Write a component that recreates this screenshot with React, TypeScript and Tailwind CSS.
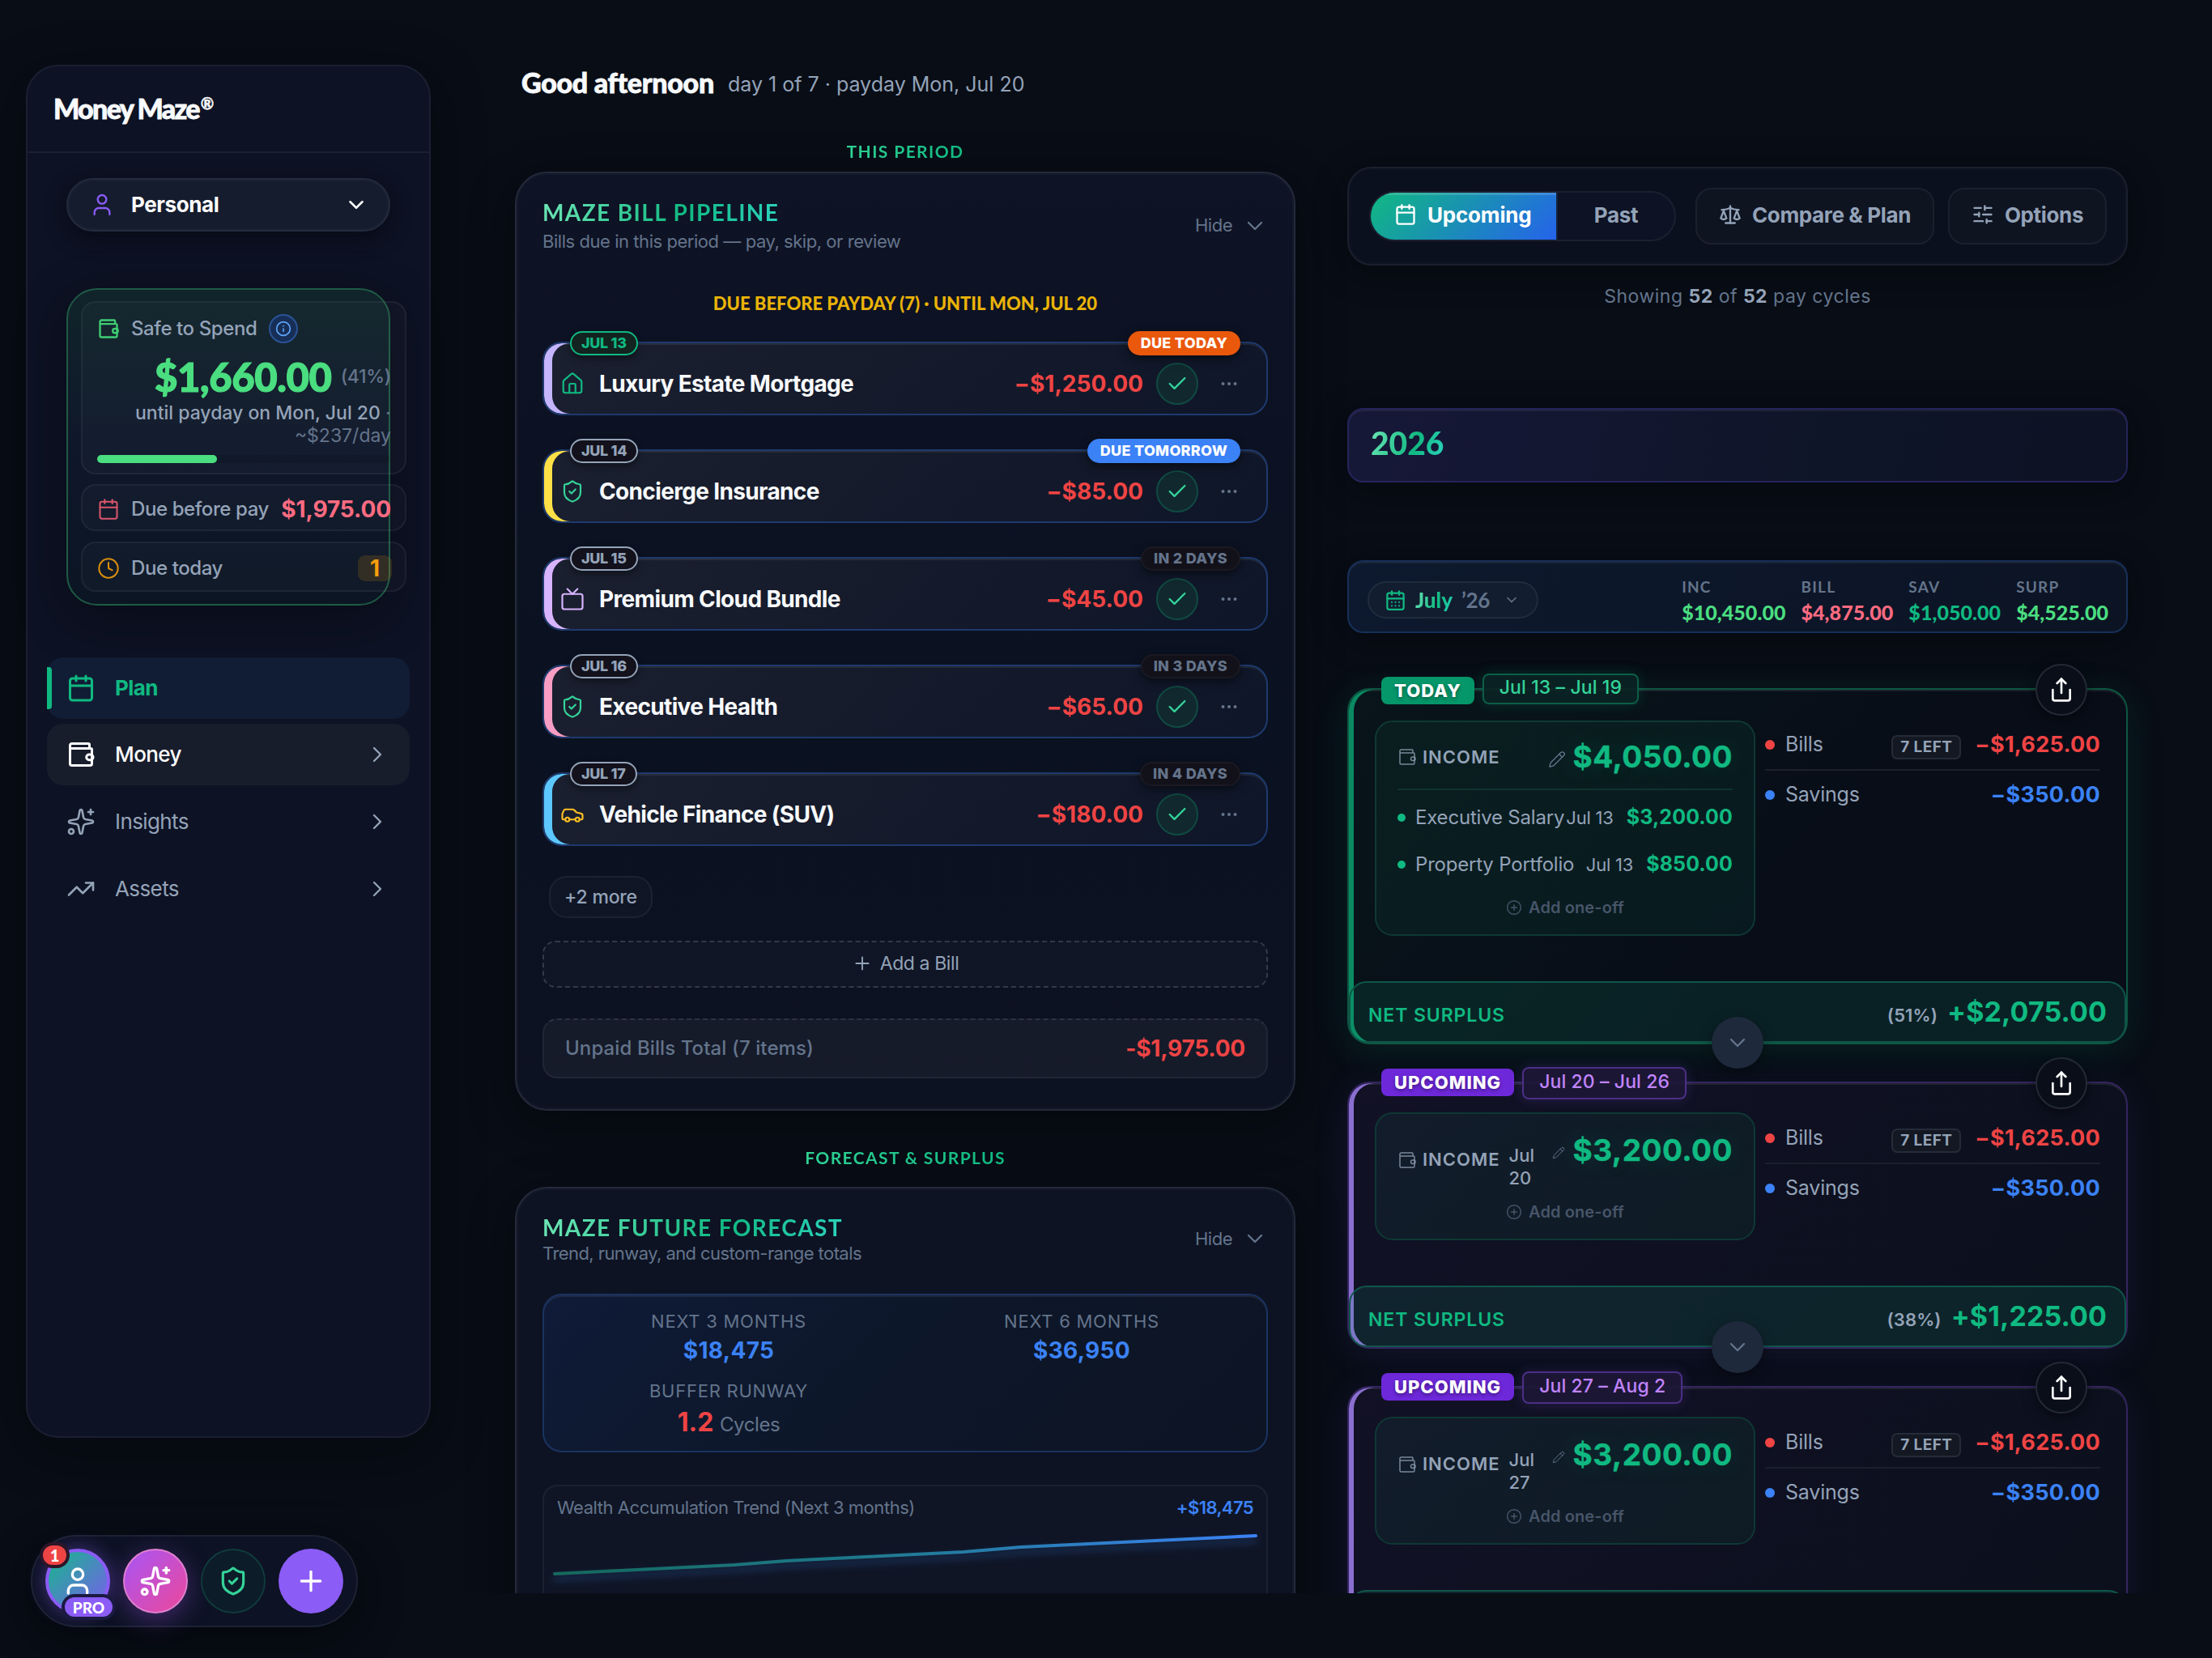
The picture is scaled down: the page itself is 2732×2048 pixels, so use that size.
import React from "react";
import {
  Calendar,
  CalendarDays,
  Car,
  Check,
  ChevronDown,
  ChevronRight,
  CirclePlus,
  Clock,
  House,
  Info,
  Pencil,
  Plus,
  Scale,
  Share,
  ShieldCheck,
  SlidersHorizontal,
  Sparkles,
  TrendingUp,
  Tv,
  User,
} from "lucide-react";

function Wallet({ size, className, strokeWidth = 2 }: { size: number; className?: string; strokeWidth?: number }) {
  return (
    <svg
      width={size}
      height={size}
      viewBox="0 0 24 24"
      fill="none"
      stroke="currentColor"
      strokeWidth={strokeWidth}
      strokeLinecap="round"
      strokeLinejoin="round"
      className={className}
    >
      <path d="M19 7V4a1 1 0 0 0-1-1H4.5A1.5 1.5 0 0 0 3 4.5v15A1.5 1.5 0 0 0 4.5 21h15a1.5 1.5 0 0 0 1.5-1.5V8a1 1 0 0 0-1-1H3" />
      <rect x="16.5" y="12" width="5.5" height="4.5" rx="2.2" />
    </svg>
  );
}

function Dots() {
  return (
    <svg width={24} height={24} viewBox="0 0 24 24" className="fill-[#64748b]">
      <circle cx="4.5" cy="12" r="2" />
      <circle cx="12" cy="12" r="2" />
      <circle cx="19.5" cy="12" r="2" />
    </svg>
  );
}

/* ---------- Sidebar ---------- */

function NavItem({
  icon,
  label,
  tone,
  arrow = true,
}: {
  icon: React.ReactNode;
  label: string;
  tone: string;
  arrow?: boolean;
}) {
  return (
    <div className={"relative flex h-[76px] items-center rounded-[20px] pl-[24px] pr-[24px] " + tone}>
      {icon}
      <span className="ml-[24px] flex-1 text-[26px] leading-[36px] tracking-[-0.6px]">{label}</span>
      {arrow && <ChevronRight size={32} strokeWidth={1.75} className="text-[#94a3b8]" />}
    </div>
  );
}

function Sidebar() {
  return (
    <aside className="ml-[32px] w-[500px] shrink-0 pt-[80px]">
      <div className="flex h-[1696px] flex-col rounded-[40px] border-2 border-[#1a2032] bg-[#0d1224] shadow-[0_16px_64px_rgba(0,0,0,0.35)]">
        <div className="flex h-[107px] items-center border-b-2 border-[#1a2032] pb-[2px] pl-[32px]">
          <div className="flex font-['Lato'] text-[34px] font-black leading-[40px] tracking-[-1.7px] text-[#f8fafc] [-webkit-text-stroke:0.8px_#f8fafc]">
            Money Maze
            <span className="relative -top-[7px] ml-[2px] text-[20px] tracking-normal [-webkit-text-stroke:0.4px_#f8fafc]">®</span>
          </div>
        </div>

        <div className="mx-[48px] mt-[31px] flex h-[66px] items-center rounded-full border-2 border-[#232b3d] bg-[#151c2e] pl-[26px] pr-[25px] shadow-[0_8px_28px_rgba(0,0,0,0.45),inset_0_0_0_2px_rgba(255,255,255,0.02)]">
          <User size={32} strokeWidth={1.75} className="text-[#8b5cf6]" />
          <span className="ml-[20px] flex-1 text-[26px] font-bold leading-[36px] tracking-[-0.4px] text-white">Personal</span>
          <ChevronDown size={30} className="text-white" />
        </div>

        <div className="mx-[48px] mt-[70px] flex h-[392px] flex-col rounded-[38px] border-2 border-[#1f5a44] bg-[linear-gradient(180deg,#10242a,#0f172a_50%,#0b1523)] pl-[16px] pt-[14px] shadow-[0_16px_60px_rgba(0,0,0,0.35)]">
          <div className="h-[214px] w-[402px] rounded-[18px] border-2 border-white/5 bg-white/[0.025] pl-[18px] pr-[17px]">
            <div className="mt-[14px] flex h-[36px] items-center">
              <Wallet size={28} className="text-[#3fce74]" />
              <span className="ml-[14px] text-[24px] font-medium leading-[36px] tracking-[-0.4px] text-[#94a3b8]">
                Safe to Spend
              </span>
              <span className="ml-[15px] flex size-[36px] items-center justify-center rounded-full border-2 border-[#2a5397] bg-[#172f57]">
                <Info size={20} className="text-[#60a5fa]" />
              </span>
            </div>
            <div className="mt-[11px] flex h-[60px] items-center justify-end">
              <span className="font-['Lato'] text-[49px] font-black leading-[60px] tracking-[-0.4px] text-[#4ade80] [-webkit-text-stroke:1.2px_#4ade80]">
                $1,660.00
              </span>
              <span className="ml-[11px] text-[23px] font-medium tracking-[-0.3px] text-[#64748b]">(41%)</span>
            </div>
            <div className="mt-px text-right text-[23px] font-medium leading-[28px] text-[#94a3b8]">
              until payday on Mon, Jul 20 <span className="text-[#64748b]">·</span>
            </div>
            <div className="text-right text-[23px] leading-[28px] text-[#64748b]">~$237/day</div>
            <div className="mt-[10px] h-[10px] w-[362px] rounded-full bg-black/10">
              <div className="h-full w-[148px] rounded-full bg-[#4ade80]" />
            </div>
          </div>
          <div className="mt-[12px] flex h-[58px] w-[402px] items-center rounded-[18px] border-2 border-white/5 bg-white/[0.025] pl-[18px] pr-[17px] pt-[3px]">
            <Calendar size={28} strokeWidth={1.75} className="text-[#d9566c]" />
            <span className="ml-[14px] flex-1 whitespace-nowrap text-[24px] font-medium tracking-[-0.4px] text-[#94a3b8]">
              Due before pay
            </span>
            <span className="text-[28px] font-bold tracking-[-0.1px] text-[#ff6b81]">$1,975.00</span>
          </div>
          <div className="mt-[13px] flex h-[62px] w-[402px] items-center rounded-[18px] border-2 border-white/5 bg-white/[0.025] pl-[18px] pr-[16px] pt-[3px]">
            <Clock size={28} strokeWidth={1.75} className="text-[#d98f0d]" />
            <span className="ml-[14px] flex-1 text-[24px] font-medium tracking-[-0.4px] text-[#94a3b8]">Due today</span>
            <span className="flex h-[32px] w-[42px] items-center justify-center rounded-[9px] bg-[#f59e0b]/15 text-[28px] font-bold text-[#f59e0b]">
              1
            </span>
          </div>
        </div>

        <nav className="mx-[24px] mt-[64px] flex flex-col gap-[6px]">
          <NavItem
            icon={
              <>
                <span className="absolute left-0 top-[12px] h-[52px] w-[6px] rounded-r-[4px] bg-[#10b981]" />
                <Calendar size={36} />
              </>
            }
            label="Plan"
            tone="bg-[#111d35] text-[#10b981] font-bold"
            arrow={false}
          />
          <NavItem icon={<Wallet size={36} />} label="Money" tone="bg-[#181d2c] text-white font-medium" />
          <NavItem icon={<Sparkles size={36} strokeWidth={1.75} />} label="Insights" tone="pt-[2px] text-[#94a3b8]" />
          <NavItem icon={<TrendingUp size={36} strokeWidth={1.75} />} label="Assets" tone="pt-[3px] text-[#94a3b8]" />
        </nav>
      </div>

      <div className="ml-[6px] mt-[120px] flex h-[114px] w-[404px] items-center gap-[16px] rounded-full border-2 border-[#1c2233] bg-[#0d1224] pl-[16px] shadow-[0_16px_56px_rgba(0,0,0,0.45)]">
        <div className="relative flex size-[80px] items-center justify-center rounded-full border-4 border-[#8b5cf6] bg-[linear-gradient(135deg,#14b88a,#7c5cf0)] shadow-[0_0_24px_rgba(139,92,246,0.45)]">
          <User size={40} className="text-white" />
          <span className="absolute -left-[11px] -top-[12px] flex h-[32px] w-[37px] items-center justify-center rounded-full border-4 border-[#2c1628] bg-[#ef4444] font-['Lato'] text-[20px] font-black leading-none text-white">
            1
          </span>
          <span className="absolute -bottom-[12px] left-[16px] flex h-[32px] w-[67px] items-center justify-center rounded-full border-4 border-[#1b1a42] bg-[#8b5cf6] font-['Lato'] text-[19px] font-black leading-none text-white">
            PRO
          </span>
        </div>
        <div className="flex size-[80px] items-center justify-center rounded-full border-2 border-[#e07fd0] bg-[linear-gradient(135deg,#a855f7,#ec4899)] shadow-[0_8px_32px_rgba(168,85,247,0.35)]">
          <Sparkles size={40} className="text-white" />
        </div>
        <div className="flex size-[80px] items-center justify-center rounded-full border-2 border-[#0f3b3b] bg-[#0d1c29]">
          <ShieldCheck size={38} className="text-[#34d399]" />
        </div>
        <div className="flex size-[80px] items-center justify-center rounded-full bg-[#8b5cf6]">
          <Plus size={40} className="text-white" />
        </div>
      </div>
    </aside>
  );
}

/* ---------- Middle column ---------- */

const GRADIENT = "bg-[linear-gradient(110deg,#6ee7b7,#10b981_60%,#2dd4bf)] bg-clip-text text-transparent";

function SectionLabel({ children, className }: { children: React.ReactNode; className: string }) {
  return (
    <div className={"flex h-[30px] items-center justify-center " + className}>
      <span className="bg-[linear-gradient(90deg,#2fd193,#10b981)] bg-clip-text font-['Lato'] text-[21px] font-bold leading-[30px] tracking-[1.4px] text-transparent">
        {children}
      </span>
    </div>
  );
}

function CardHeader({ title, sub, subClass, hide }: { title: string; sub: string; subClass: string; hide: string }) {
  return (
    <div className="flex h-[70px] items-center justify-between">
      <div className="h-[70px]">
        <div>
          <span className={"font-['Lato'] text-[28px] font-bold leading-[36px] tracking-[1.4px] " + GRADIENT}>{title}</span>
        </div>
        <div className={"text-[22px] leading-[32px] text-[#64748b] " + subClass}>{sub}</div>
      </div>
      <div className={"flex items-center text-[22px] tracking-[-0.5px] text-[#64748b] " + hide}>
        Hide
        <ChevronDown size={32} strokeWidth={1.75} className="ml-[12px]" />
      </div>
    </div>
  );
}

type Bill = {
  date: string;
  datePill: string;
  due: string;
  duePill: string;
  bar: string;
  icon: React.ReactNode;
  name: string;
  amount: string;
};

const GREY_DATE = "border-[#94a3b8] bg-[#12111c] text-[#94a3b8]";
const GREY_DUE = "border-2 border-[#1b1922] bg-[#12111a] text-[#64748b] px-[14px]";

const BILLS: Bill[] = [
  {
    date: "JUL 13",
    datePill: "border-[#10b981] bg-[#13231f] text-[#10b981]",
    due: "DUE TODAY",
    duePill: "bg-[#ea580c] text-white px-[16px]",
    bar: "shadow-[inset_10px_0_0_#c4b5fd,inset_0_2px_0_rgba(255,255,255,0.07)]",
    icon: <House size={30} strokeWidth={1.75} className="text-[#10b981]" />,
    name: "Luxury Estate Mortgage",
    amount: "−$1,250.00",
  },
  {
    date: "JUL 14",
    datePill: GREY_DATE,
    due: "DUE TOMORROW",
    duePill: "bg-[#3b82f6] text-white px-[16px]",
    bar: "shadow-[inset_10px_0_0_#fde047,inset_0_2px_0_rgba(255,255,255,0.07)]",
    icon: <ShieldCheck size={30} strokeWidth={1.75} className="text-[#34d399]" />,
    name: "Concierge Insurance",
    amount: "−$85.00",
  },
  {
    date: "JUL 15",
    datePill: GREY_DATE,
    due: "IN 2 DAYS",
    duePill: GREY_DUE,
    bar: "shadow-[inset_10px_0_0_#d8b4fe,inset_0_2px_0_rgba(255,255,255,0.07)]",
    icon: <Tv size={30} strokeWidth={1.75} className="text-[#d8b4fe]" />,
    name: "Premium Cloud Bundle",
    amount: "−$45.00",
  },
  {
    date: "JUL 16",
    datePill: GREY_DATE,
    due: "IN 3 DAYS",
    duePill: GREY_DUE,
    bar: "shadow-[inset_10px_0_0_#f99dc4,inset_0_2px_0_rgba(255,255,255,0.07)]",
    icon: <ShieldCheck size={30} strokeWidth={1.75} className="text-[#34d399]" />,
    name: "Executive Health",
    amount: "−$65.00",
  },
  {
    date: "JUL 17",
    datePill: GREY_DATE,
    due: "IN 4 DAYS",
    duePill: GREY_DUE,
    bar: "shadow-[inset_10px_0_0_#5cc8ff,inset_0_2px_0_rgba(255,255,255,0.07)]",
    icon: <Car size={30} strokeWidth={1.75} className="text-[#fbbf24]" />,
    name: "Vehicle Finance (SUV)",
    amount: "−$180.00",
  },
];

function BillRow({ bill }: { bill: Bill }) {
  return (
    <div
      className={
        "relative flex h-[91px] items-center rounded-[24px] border-2 border-[#1e3a6e] bg-[linear-gradient(135deg,#1b2030,#151b2b_45%,#0f1629)] pl-[20px] pr-[34px] pt-[12px] " +
        bill.bar
      }
    >
      <span
        className={
          "absolute -top-[15px] left-[32px] flex h-[30px] items-center whitespace-nowrap rounded-full border-2 px-[12px] text-[18px] font-extrabold leading-none tracking-[-0.3px] shadow-[0_4px_8px_rgba(0,0,0,0.4)] " +
          bill.datePill
        }
      >
        {bill.date}
      </span>
      <span
        className={
          "absolute -top-[15px] right-[32px] flex h-[30px] items-center whitespace-nowrap rounded-full text-[18px] font-extrabold leading-none tracking-[0.3px] shadow-[0_4px_12px_rgba(0,0,0,0.5)] " +
          bill.duePill
        }
      >
        {bill.due}
      </span>
      {bill.icon}
      <span className="ml-[18px] flex-1 text-[28px] font-bold leading-[40px] tracking-[-0.65px] text-[#f8fafc]">
        {bill.name}
      </span>
      <span className="text-[28px] font-bold leading-[40px] tracking-[0.05px] text-[#ef4444]">{bill.amount}</span>
      <span className="ml-[16px] flex size-[52px] items-center justify-center rounded-full border-2 border-[#104a42] bg-[#11282f]">
        <Check size={28} className="text-[#34d399]" />
      </span>
      <span className="ml-[26px]">
        <Dots />
      </span>
    </div>
  );
}

function Stat({ label, children }: { label: string; children: React.ReactNode }) {
  return (
    <div className="flex h-[86px] flex-col items-center">
      <div className="text-[22px] leading-[32px] tracking-[0.75px] text-[#64748b]">{label}</div>
      {children}
    </div>
  );
}

const CARD = "border-2 border-[#232a3a] shadow-[0_16px_56px_rgba(0,0,0,0.4),inset_0_0_0_2px_rgba(255,255,255,0.025)]";

function MiddleColumn() {
  return (
    <section className="w-[964px] shrink-0 pt-[82px]">
      <div className="flex h-[40px] items-center pl-[8px]">
        <span className="font-['Lato'] text-[34px] font-black leading-[40px] tracking-[-0.3px] text-[#f8fafc] [-webkit-text-stroke:0.8px_#f8fafc]">
          Good afternoon
        </span>
        <span className="ml-[17px] pt-[4px] text-[25px] leading-[36px] text-[#94a3b8]">
          day 1 of 7 · payday Mon, Jul 20
        </span>
      </div>

      <SectionLabel className="mt-[50px]">THIS PERIOD</SectionLabel>

      <div
        className={
          "mt-[10px] rounded-[40px] bg-[linear-gradient(180deg,#0e1325,#0a1120_60%,#0d1222)] px-[32px] pb-[38px] pt-[30px] " +
          CARD
        }
      >
        <CardHeader
          title="MAZE BILL PIPELINE"
          sub="Bills due in this period — pay, skip, or review"
          subClass="mt-[2px] tracking-[-0.45px]"
          hide="-mt-px"
        />
        <div className="mt-[46px] text-center font-['Lato'] text-[22px] font-black leading-[30px] tracking-[0px] text-[#eab308]">
          DUE BEFORE PAYDAY (7) · UNTIL MON, JUL 20
        </div>
        <div className="mt-[32px] flex flex-col gap-[42px]">
          {BILLS.map((b) => (
            <BillRow key={b.date} bill={b} />
          ))}
        </div>
        <div className="ml-[8px] mt-[37px] flex h-[52px] w-[128px] items-center justify-center rounded-[22px] border-2 border-white/5 bg-white/[0.02] text-[23px] font-medium tracking-[-0.2px] text-[#94a3b8]">
          +2 more
        </div>
        <div className="mt-[28px] flex h-[58px] items-center justify-center rounded-[16px] border-2 border-dashed border-white/15 bg-white/[0.02] pb-[2px] text-[23px] tracking-[-0.4px] text-[#94a3b8]">
          <Plus size={26} strokeWidth={1.75} className="mr-[9px]" />
          Add a Bill
        </div>
        <div className="mt-[38px] flex h-[74px] items-center justify-between rounded-[18px] border-2 border-white/5 border-t-white/10 bg-white/[0.04] pl-[26px] pr-[26px] [border-top-style:dashed]">
          <span className="text-[24px] font-medium tracking-[0.1px] text-[#64748b]">Unpaid Bills Total (7 items)</span>
          <span className="text-[28px] font-bold tracking-[-0.2px] text-[#ef4444]">-$1,975.00</span>
        </div>
      </div>

      <SectionLabel className="mt-[43px]">FORECAST &amp; SURPLUS</SectionLabel>

      <div className={"mt-[21px] h-[620px] rounded-[40px] bg-[#0d1323] px-[32px] pt-[30px] " + CARD}>
        <CardHeader
          title="MAZE FUTURE FORECAST"
          sub="Trend, runway, and custom-range totals"
          subClass="-mt-[2px] tracking-[-0.57px]"
          hide="-mt-[6px]"
        />
        <div className="mt-[30px] grid h-[196px] grid-cols-2 content-start gap-x-[12px] rounded-[24px] border-2 border-[#1b3360] bg-[linear-gradient(135deg,#0f1b38,#0d1729_50%,#0d1424)] px-[16px] pt-[16px] shadow-[inset_0_2px_0_rgba(255,255,255,0.07)]">
          <Stat label="NEXT 3 MONTHS">
            <div className="mt-px text-[28px] font-bold leading-[38px] tracking-[0.3px] text-[#3b82f6]">$18,475</div>
          </Stat>
          <Stat label="NEXT 6 MONTHS">
            <div className="mt-px text-[28px] font-bold leading-[38px] tracking-[0.3px] text-[#3b82f6]">$36,950</div>
          </Stat>
          <Stat label="BUFFER RUNWAY">
            <div className="mt-px text-[32px] font-bold leading-[44px] text-[#ef4444]">
              1.2 <span className="text-[24px] font-normal tracking-[-0.4px] text-[#64748b]">Cycles</span>
            </div>
          </Stat>
        </div>
        <div className="mt-[40px] h-[240px] rounded-[18px] border-2 border-white/5 bg-white/[0.01]">
          <div className="mt-[11px] flex h-[30px] items-center justify-between px-[16px] text-[22px] tracking-[-0.45px]">
            <span className="text-[#64748b]">Wealth Accumulation Trend (Next 3 months)</span>
            <span className="font-semibold tracking-[-0.6px] text-[#3b82f6]">+$18,475</span>
          </div>
          <svg width={892} height={88} viewBox="672 1877 892 88" fill="none">
            <defs>
              <linearGradient id="trend" x1="684" y1="0" x2="1552" y2="0" gradientUnits="userSpaceOnUse">
                <stop offset="0" stopColor="#15695a" />
                <stop offset="0.5" stopColor="#217b95" />
                <stop offset="1" stopColor="#3b82f6" />
              </linearGradient>
              <filter id="glow" x="-5%" y="-60%" width="110%" height="250%">
                <feDropShadow dx="0" dy="6" stdDeviation="5" floodColor="#3b82f6" floodOpacity="0.35" />
              </filter>
            </defs>
            <path
              d="M685 1944L907 1933Q920 1932 971 1928L1190 1917Q1203 1916 1261 1911L1551 1897"
              stroke="url(#trend)"
              strokeWidth="4"
              strokeLinecap="round"
              filter="url(#glow)"
            />
          </svg>
        </div>
      </div>
    </section>
  );
}

/* ---------- Right column ---------- */

type Income = { name: string; date: string; amount: string };

type Period = {
  label: string;
  range: string;
  today: boolean;
  incomeDate?: string[];
  income: string;
  incomes: Income[];
  net?: { percent: string; surplus: string };
};

const PERIODS: Period[] = [
  {
    label: "TODAY",
    range: "Jul 13 – Jul 19",
    today: true,
    income: "$4,050.00",
    incomes: [
      { name: "Executive Salary", date: "Jul 13", amount: "$3,200.00" },
      { name: "Property Portfolio", date: "Jul 13", amount: "$850.00" },
    ],
    net: { percent: "(51%)", surplus: "+$2,075.00" },
  },
  {
    label: "UPCOMING",
    range: "Jul 20 – Jul 26",
    today: false,
    incomeDate: ["Jul", "20"],
    income: "$3,200.00",
    incomes: [],
    net: { percent: "(38%)", surplus: "+$1,225.00" },
  },
  {
    label: "UPCOMING",
    range: "Jul 27 – Aug 2",
    today: false,
    incomeDate: ["Jul", "27"],
    income: "$3,200.00",
    incomes: [],
  },
];

const INCOME_AMOUNT =
  "text-[37px] font-bold leading-[40px] tracking-[0.5px] text-[#10b981] [-webkit-text-stroke:0.4px_#10b981] [text-shadow:0_0_32px_rgba(16,185,129,0.2)]";

function PeriodCard({ p }: { p: Period }) {
  return (
    <div
      className={
        "relative flex shrink-0 flex-col rounded-[28px] border-2 " +
        (p.today
          ? "h-[440px] border-[#0d5741] bg-[linear-gradient(135deg,#08151a,#080d18_60%)] shadow-[0_8px_48px_rgba(16,185,129,0.12),inset_6px_0_0_#0b8a62,inset_0_2px_0_rgba(255,255,255,0.08)]"
          : "h-[330px] border-[#342560] bg-[linear-gradient(135deg,#121126,#0b101c)] shadow-[0_8px_48px_rgba(139,92,246,0.1),inset_6px_0_0_#8b6fd0,inset_0_2px_0_rgba(255,255,255,0.08)]")
      }
    >
      <div className="absolute -top-[20px] left-[40px] flex items-start gap-[10px]">
        <span
          className={
            "flex h-[34px] items-center rounded-[8px] px-[16px] text-[22px] font-extrabold leading-none tracking-[1px] text-white [text-shadow:0_2px_4px_rgba(0,0,0,0.4)] " +
            (p.today ? "mt-[4px] bg-[#059669]" : "mt-[2px] bg-[#6d28d9]")
          }
        >
          {p.label}
        </span>
        <span
          className={
            "flex items-center rounded-[8px] border-2 px-[19px] pb-[3px] text-[23px] font-medium leading-none tracking-[0.1px] " +
            (p.today
              ? "h-[38px] border-[#0c5e47] bg-[#0a2424]/90 text-[#34d399] shadow-[0_0_16px_rgba(16,185,129,0.2)]"
              : "h-[40px] border-[#4b2f86] bg-[#1e1737]/90 text-[#c084fc] shadow-[0_0_16px_rgba(139,92,246,0.2)]")
          }
        >
          {p.range}
        </span>
      </div>
      <span className="absolute -top-[32px] right-[48px] flex size-[64px] items-center justify-center rounded-full border-2 border-[#242936] bg-[#0a0e19] shadow-[0_4px_16px_rgba(0,0,0,0.5)]">
        <Share size={32} className="text-white" />
      </span>

      <div className="flex pl-[32px] pr-[32px] pt-[36px]">
        <div
          className={
            "w-[470px] shrink-0 rounded-[22px] border-2 border-[#0f3834] pl-[26px] pr-[26px] " +
            (p.today
              ? "mt-[2px] h-[266px] bg-[linear-gradient(135deg,#0a1e20,#081a1f)]"
              : "h-[158px] bg-[linear-gradient(135deg,#121c2b,#0e1b24)]")
          }
        >
          {p.today ? (
            <div className="flex h-[84px] items-center border-b-2 border-[#0e3330] pt-[4px]">
              <Wallet size={24} strokeWidth={1.5} className="text-[#94a3b8]/80" />
              <span className="ml-[7px] flex-1 text-[22px] font-semibold tracking-[1px] text-[#94a3b8]">INCOME</span>
              <Pencil size={22} strokeWidth={1.5} className="mt-[6px] text-[#64748b]" />
              <span className={"ml-[9px] " + INCOME_AMOUNT}>{p.income}</span>
            </div>
          ) : (
            <div className="flex h-[84px] pt-[14px]">
              <div className="flex h-[84px] items-center pt-px">
                <Wallet size={24} strokeWidth={1.5} className="text-[#94a3b8]/80" />
                <span className="ml-[7px] text-[22px] font-semibold tracking-[1px] text-[#94a3b8]">INCOME</span>
              </div>
              <div className="ml-[11px] mt-[23px] flex-1 text-[22px] font-medium leading-[28px] text-[#94a3b8]">
                {p.incomeDate?.map((d) => (
                  <div key={d}>{d}</div>
                ))}
              </div>
              <Pencil size={16} strokeWidth={1.5} className="mt-[26px] text-[#64748b]" />
              <span className={"ml-[10px] mt-[11px] " + INCOME_AMOUNT}>{p.income}</span>
            </div>
          )}
          {p.incomes.length > 0 && (
            <div className="mt-[5px] flex flex-col">
              {p.incomes.map((i) => (
                <div key={i.name} className="flex h-[58px] items-center">
                  <span className="size-[10px] shrink-0 rounded-full bg-[#10b981]" />
                  <span className="ml-[12px] flex-1 whitespace-nowrap text-[24px] tracking-[-0.2px] text-[#94a3b8]">
                    {i.name}
                  </span>
                  <span className="text-[22px] tracking-[-0.2px] text-[#94a3b8]">{i.date}</span>
                  <span className="ml-[16px] text-[25px] font-bold tracking-[0.1px] text-[#10b981]">{i.amount}</span>
                </div>
              ))}
            </div>
          )}
          <div
            className={
              "flex h-[40px] items-center justify-center text-[20px] font-semibold tracking-[0.1px] text-[#475569] " +
              (p.today ? "mt-[4px]" : "mt-[17px]")
            }
          >
            <CirclePlus size={20} strokeWidth={1.75} className="mr-[8px]" />
            Add one-off
          </div>
        </div>

        <div className="ml-[12px] flex-1">
          <div className="flex h-[64px] items-center border-b-2 border-[#1c202d] pt-px">
            <span className="size-[12px] rounded-full bg-[#ef4444]" />
            <span className="ml-[13px] flex-1 text-[25px] tracking-[-0.2px] text-[#94a3b8]">Bills</span>
            <span className="mt-[6px] flex h-[30px] items-center rounded-[7px] border-2 border-[#252b38] bg-[#131822] px-[9px] text-[19px] font-bold leading-none tracking-[0.4px] text-[#94a3b8]">
              7 LEFT
            </span>
            <span className="ml-[17px] text-[27px] font-bold leading-[32px] tracking-[0.3px] text-[#ef4444]">
              −$1,625.00
            </span>
          </div>
          <div className="flex h-[60px] items-center">
            <span className="size-[12px] rounded-full bg-[#3b82f6]" />
            <span className="ml-[13px] flex-1 text-[25px] tracking-[-0.2px] text-[#94a3b8]">Savings</span>
            <span className="text-[27px] font-bold leading-[32px] tracking-[0.3px] text-[#3b82f6]">−$350.00</span>
          </div>
        </div>
      </div>

      <div className="mt-auto flex h-[76px] items-center justify-between rounded-[22px] border-2 border-[#10564a] bg-[#10b981]/12 pl-[22px] pr-[22px]">
        {p.net && (
          <>
            <span className="pt-[8px] text-[23px] font-semibold tracking-[0.9px] text-[#10b981]">NET SURPLUS</span>
            <span className="flex items-baseline pt-px">
              <span className="text-[22px] font-semibold tracking-[0.1px] text-[#94a3b8]">{p.net.percent}</span>
              <span className="ml-[12px] text-[34px] font-bold leading-[40px] tracking-[0.1px] text-[#10b981]">
                {p.net.surplus}
              </span>
            </span>
          </>
        )}
      </div>
      <span className="absolute -bottom-[32px] left-[448px] z-10 flex size-[64px] items-center justify-center rounded-full bg-[#1e293b] shadow-[0_4px_16px_rgba(0,0,0,0.4)]">
        <ChevronDown size={32} strokeWidth={1.75} className="text-[#64748b]" />
      </span>
    </div>
  );
}

function MonthTotal({ label, value, tone }: { label: string; value: string; tone: string }) {
  return (
    <div className="font-['Lato']">
      <div className="text-[19px] font-bold leading-[30px] tracking-[1.2px] text-[#64748b]">{label}</div>
      <div className={"text-[25px] font-black leading-[32px] tracking-[0.05px] " + tone}>{value}</div>
    </div>
  );
}

const TOOL_BUTTON =
  "flex h-[70px] shrink-0 items-center justify-center rounded-[20px] border-2 border-[#1b202e] bg-[#0f1421] pb-[4px] text-[26px] font-bold tracking-[-0.35px] text-[#94a3b8]";

function RightColumn() {
  return (
    <section className="w-[964px] shrink-0 pt-[206px]">
      <div className="flex h-[122px] items-center rounded-[30px] border-2 border-[#1a202e] bg-[#0b101e] px-[25px] shadow-[0_8px_40px_rgba(0,0,0,0.35),inset_0_0_0_2px_rgba(255,255,255,0.015)]">
        <div className="flex h-[62px] w-[379px] shrink-0 overflow-hidden rounded-full border-2 border-[#1b2030] bg-[#0d1224]">
          <div className="flex w-[231px] items-center border-r-2 border-[#15233c] bg-[linear-gradient(135deg,#10b981,#2563eb)] pb-[4px] pl-[29px] text-[26px] font-bold tracking-[-0.2px] text-white shadow-[inset_0_3px_0_rgba(255,255,255,0.15)]">
            <Calendar size={28} className="mr-[13px]" />
            Upcoming
          </div>
          <div className="flex flex-1 items-center justify-center pb-[4px] text-[26px] font-bold tracking-[-0.3px] text-[#94a3b8]">
            Past
          </div>
        </div>
        <div className={"ml-[24px] w-[295px] " + TOOL_BUTTON}>
          <Scale size={28} className="mr-[13px]" />
          Compare &amp; Plan
        </div>
        <div className={"ml-[17px] w-[196px] " + TOOL_BUTTON}>
          <SlidersHorizontal size={28} className="mr-[13px]" />
          Options
        </div>
      </div>

      <div className="mt-[20px] text-center text-[23px] leading-[36px] tracking-[0.5px] text-[#64748b]">
        Showing <b className="font-bold text-[#94a3b8]">52</b> of <b className="font-bold text-[#94a3b8]">52</b> pay cycles
      </div>

      <div className="mt-[120px] flex h-[92px] items-center rounded-[20px] border-2 border-[#25245a] bg-[linear-gradient(100deg,#161838,#0f1529_60%,#0d1324)] pl-[27px] shadow-[0_8px_40px_rgba(0,0,0,0.35),inset_0_2px_0_rgba(255,255,255,0.06)]">
        <span className={"-mt-[6px] font-['Lato'] text-[39px] font-black leading-[48px] " + GRADIENT}>2026</span>
      </div>

      <div className="mt-[96px] flex h-[90px] items-center rounded-[20px] border-2 border-[#172f59] bg-[linear-gradient(100deg,#0d192e,#0c1424)] pl-[23px] pr-[22px] shadow-[0_8px_40px_rgba(0,0,0,0.35),inset_0_2px_0_rgba(255,255,255,0.06)]">
        <div className="mt-[8px] flex h-[46px] w-[211px] items-center rounded-full border-2 border-[#202b3d] bg-[#121d30] pl-[19px] font-['Lato'] text-[26px] font-black">
          <CalendarDays size={27} className="text-[#10b981]" />
          <span className={"ml-[11px] " + GRADIENT}>July</span>
          <span className="ml-[11px] font-bold tracking-[-0.3px] text-[#64748b]">’26</span>
          <ChevronDown size={20} className="ml-[17px] text-[#64748b]" />
        </div>
        <div className="ml-auto flex gap-[19px] pt-[8px]">
          <MonthTotal label="INC" value="$10,450.00" tone="text-[#4ade80]" />
          <MonthTotal label="BILL" value="$4,875.00" tone="text-[#ff6b81]" />
          <MonthTotal label="SAV" value="$1,050.00" tone="text-[#10b981]" />
          <MonthTotal label="SURP" value="$4,525.00" tone="text-[#4ade80]" />
        </div>
      </div>

      <div className="mt-[68px] flex flex-col gap-[46px]">
        {PERIODS.map((p) => (
          <PeriodCard key={p.range} p={p} />
        ))}
      </div>
    </section>
  );
}

export default function App() {
  return (
    <div className="flex h-[2048px] w-[2732px] overflow-hidden bg-[#080d16] font-['Inter','Liberation_Sans',sans-serif]">
      <Sidebar />
      <main className="ml-[32px] flex h-[1968px] gap-[64px] overflow-hidden pl-[72px] pr-[60px]">
        <MiddleColumn />
        <RightColumn />
      </main>
    </div>
  );
}
